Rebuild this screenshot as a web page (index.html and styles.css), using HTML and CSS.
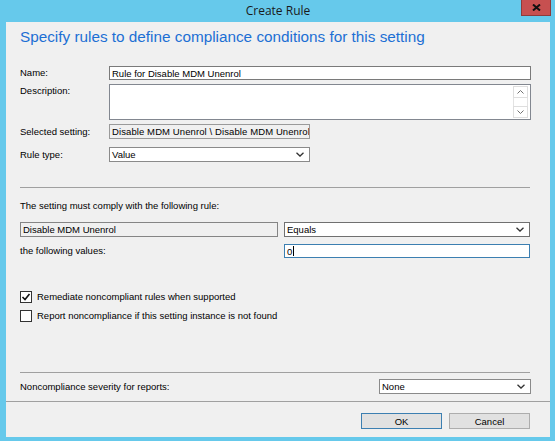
FILE: index.html
```html
<!DOCTYPE html>
<html>
<head>
<meta charset="utf-8">
<link rel="stylesheet" href="styles.css">
</head>
<body>
<div class="window">
  <div class="titlebar">
    <span></span>
    <span class="title">Create Rule</span>
    <div class="close">
      <svg width="9" height="7" viewBox="0 0 9 7"><path d="M1 0.5 L8 6.5 M8 0.5 L1 6.5" stroke="#111" stroke-width="2" fill="none"/></svg>
    </div>
  </div>
  <div class="client">
    <div class="heading">Specify rules to define compliance conditions for this setting</div>
    <div class="form">
      <div class="row r-name">
        <div class="lbl">Name:</div>
        <div class="box text wide">Rule for Disable MDM Unenrol</div>
      </div>
      <div class="row r-desc">
        <div class="lbl">Description:</div>
        <div class="box area wide">
          <div class="area-body"></div>
          <div class="scroll">
            <div class="sbtn"><svg width="7" height="4" viewBox="0 0 7 4"><polyline points="0.5,3.5 3.5,0.5 6.5,3.5" stroke="#707070" stroke-width="1" fill="none"/></svg></div>
            <div class="strack"></div>
            <div class="sbtn"><svg width="7" height="4" viewBox="0 0 7 4"><polyline points="0.5,0.5 3.5,3.5 6.5,0.5" stroke="#707070" stroke-width="1" fill="none"/></svg></div>
          </div>
        </div>
      </div>
      <div class="row r-sel">
        <div class="lbl">Selected setting:</div>
        <div class="box readonly narrow">Disable MDM Unenrol \ Disable MDM Unenrol</div>
      </div>
      <div class="row r-type">
        <div class="lbl">Rule type:</div>
        <div class="box select narrow"><span>Value</span><svg class="chev" width="8" height="5" viewBox="0 0 8 5"><polyline points="0.5,0.8 4,4 7.5,0.8" stroke="#333" stroke-width="1.3" fill="none"/></svg></div>
      </div>
      <div class="sep"></div>
      <div class="ruletext">The setting must comply with the following rule:</div>
      <div class="row r-rule">
        <div class="box readonly setting">Disable MDM Unenrol</div>
        <div class="box select op"><span>Equals</span><svg class="chev" width="8" height="5" viewBox="0 0 8 5"><polyline points="0.5,0.8 4,4 7.5,0.8" stroke="#333" stroke-width="1.3" fill="none"/></svg></div>
      </div>
      <div class="row r-val">
        <div class="lbl vlbl">the following values:</div>
        <div class="box text focus op">0<span class="caret"></span></div>
      </div>
      <div class="row r-cb1">
        <div class="cb"><svg width="10" height="10" viewBox="0 0 10 10"><polyline points="1.5,5 4,7.5 8.5,2" stroke="#111" stroke-width="1.6" fill="none"/></svg></div>
        <div class="cblbl">Remediate noncompliant rules when supported</div>
      </div>
      <div class="row r-cb2">
        <div class="cb"></div>
        <div class="cblbl">Report noncompliance if this setting instance is not found</div>
      </div>
      <div class="sep sep2"></div>
      <div class="row r-sev">
        <div class="lbl sevlbl">Noncompliance severity for reports:</div>
        <div class="box select sev"><span>None</span><svg class="chev" width="8" height="5" viewBox="0 0 8 5"><polyline points="0.5,0.8 4,4 7.5,0.8" stroke="#333" stroke-width="1.3" fill="none"/></svg></div>
      </div>
    </div>
    <div class="sep-full"></div>
    <div class="buttons">
      <div class="btn default">OK</div>
      <div class="btn">Cancel</div>
    </div>
  </div>
</div>
</body>
</html>
```
FILE: styles.css
```css
* { box-sizing: border-box; }
html, body { margin: 0; padding: 0; }
body {
  width: 555px;
  height: 441px;
  overflow: hidden;
  font-family: "Liberation Sans", Arial, sans-serif;
  font-size: 9.5px;
  color: #000;
}
.window {
  width: 555px;
  height: 441px;
  background: #66c9eb;
  display: flex;
  flex-direction: column;
  padding: 0 5px 4px 6px;
}
.titlebar {
  height: 22px;
  display: grid;
  grid-template-columns: 1fr auto 1fr;
  flex: none;
}
.title {
  line-height: 22px;
  font-size: 12px;
  color: #1a1a1a;
  font-family: "Open Sans", "Liberation Sans", sans-serif;
}
.close {
  justify-self: end;
  align-self: start;
  width: 30px;
  height: 16px;
  margin-right: -1px;
  background: #c75050;
  border: 1px solid #8e3b3b;
  border-top: none;
  display: flex;
  align-items: center;
  justify-content: center;
}
.client {
  flex: 1;
  background: #f0f0f0;
  display: flex;
  flex-direction: column;
}
.heading {
  height: 30px;
  line-height: 30px;
  padding-left: 14px;
  font-size: 15.3px;
  color: #1c6fd4;
}
.form {
  margin-left: 14px;
  width: 511px;
  padding-top: 14px;
  display: flex;
  flex-direction: column;
}
.row {
  display: flex;
  align-items: center;
}
.lbl {
  width: 89px;
  flex: none;
  line-height: 14px;
  white-space: nowrap;
}
.box {
  border: 1px solid #7a7a7a;
  background: #fff;
  white-space: nowrap;
  overflow: hidden;
  padding-left: 2px;
  display: flex;
  align-items: center;
}
.text { height: 14px; }
.wide { width: 422px; }
.narrow { width: 201px; }
.r-name { margin-top: 0; height: 14px; }
.r-desc { margin-top: 4px; align-items: flex-start; }
.area {
  height: 36px;
  border-color: #828790;
  align-items: stretch;
  padding: 1px 2px 1px 0;
}
.area-body { flex: 1; }
.scroll {
  width: 15px;
  display: flex;
  flex-direction: column;
  border: 1px solid #e3e3e3;
  background: #fff;
}
.sbtn {
  height: 12px;
  display: flex;
  align-items: center;
  justify-content: center;
  border: 1px solid #dedede;
  margin: -1px;
}
.strack { flex: 1; }
.r-sel { margin-top: 4px; }
.readonly {
  height: 15px;
  background: #f0f0f0;
  border-color: #9a9a9a;
}
.r-sel .readonly { letter-spacing: 0.1px; }
.r-type { margin-top: 8px; }
.select {
  height: 15px;
  justify-content: space-between;
  border-color: #8a8a8a;
}
.chev { margin-right: 5px; flex: none; }
.sep {
  margin-top: 25px;
  width: 510px;
  height: 1px;
  background: #a0a0a0;
}
.ruletext {
  margin-top: 11px;
  line-height: 14px;
}
.r-rule { margin-top: 9px; }
.setting { width: 258px; border-color: #858585; }
.op { width: 246px; margin-left: 6px; }
.r-rule .op { border-color: #707070; }
.r-val { margin-top: 7px; }
.vlbl { width: 264px; }
.r-val .op { margin-left: 0; }
.focus { border-color: #3c7fb1; }
.caret {
  display: inline-block;
  width: 1px;
  height: 10px;
  background: #000;
  margin-left: 1px;
}
.r-cb1 { margin-top: 32px; height: 14px; }
.r-cb2 { margin-top: 5px; height: 14px; }
.cb {
  width: 12px;
  height: 12px;
  border: 1px solid #333;
  background: #fff;
  display: flex;
  align-items: center;
  justify-content: center;
  flex: none;
}
.cblbl { margin-left: 5px; line-height: 14px; white-space: nowrap; }
.sep2 { margin-top: 49px; }
.r-sev { margin-top: 6px; }
.sevlbl { width: 359px; }
.sev { width: 152px; }
.sep-full {
  margin-top: 7px;
  height: 1px;
  background: #a0a0a0;
}
.buttons {
  margin-top: 11px;
  display: flex;
  justify-content: flex-end;
  gap: 7px;
  padding-right: 20px;
}
.btn {
  width: 81px;
  height: 16px;
  background: #e1e1e1;
  border: 1px solid #adadad;
  display: flex;
  align-items: center;
  justify-content: center;
}
.btn.default { border-color: #3c7fb1; }
```
